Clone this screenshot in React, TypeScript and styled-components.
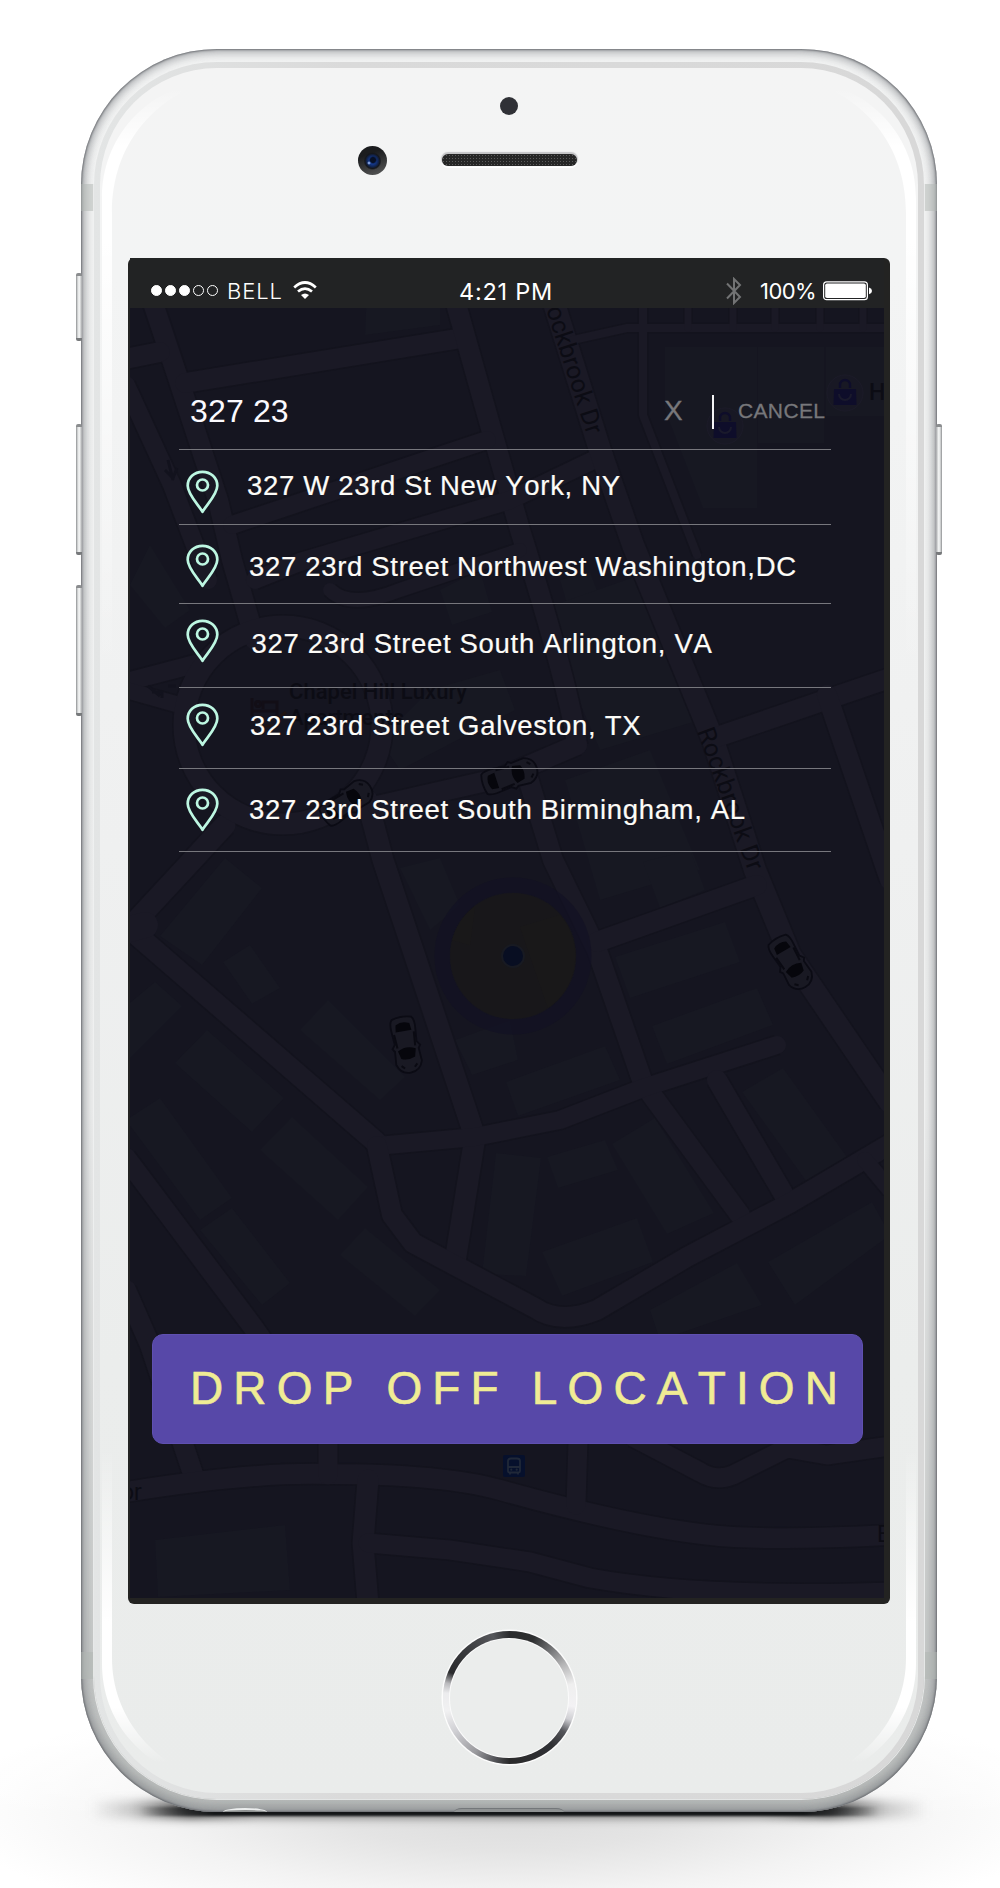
import React from "react";
import styled, { createGlobalStyle } from "styled-components";

const Global = createGlobalStyle`
  html, body { margin: 0; padding: 0; background: #fff; }
  * { box-sizing: border-box; }
`;

const sans = `"Liberation Sans", Arial, sans-serif`;

/* ---------- device ---------- */

const Page = styled.main`
  position: relative;
  width: 1000px;
  height: 1888px;
  padding: 49px 63px 0 81px;
  overflow: hidden;
  background: #fff;
  font-family: ${sans};
  font-kerning: none;
`;

const Floor = styled.div`
  position: absolute;
  left: 0;
  right: 0;
  top: 1600px;
  height: 288px;
  background:
    linear-gradient(#fff 0, rgba(255, 255, 255, 0.35) 190px, transparent 216px),
    radial-gradient(ellipse 560px 130px at 509px 212px, #dcdcdc 0, #e4e4e4 30%, #f3f3f3 62%, #fcfcfc 90%, #fff 100%);
`;

const Contact = styled.div`
  position: absolute;
  left: 90px;
  right: 72px;
  top: 1801px;
  height: 17px;
  background: linear-gradient(90deg, transparent 0, rgba(70, 70, 70, 0.25) 5%, rgba(20, 20, 20, 0.85) 12%, rgba(20, 20, 20, 0.5) 20%, rgba(20, 20, 20, 0.5) 80%, rgba(20, 20, 20, 0.85) 88%, rgba(70, 70, 70, 0.25) 95%, transparent 100%);
  filter: blur(5px);
`;

const ContactLine = styled.div`
  position: absolute;
  left: 140px;
  right: 122px;
  top: 1807px;
  height: 9px;
  background: linear-gradient(90deg, transparent 0, #141618 10%, #141618 90%, transparent 100%);
  filter: blur(1.3px);
`;

const Key = styled.span<{ $side: "left" | "right"; $top: number; $h: number }>`
  position: absolute;
  ${(p) => p.$side}: -5px;
  top: ${(p) => p.$top}px;
  width: 6px;
  height: ${(p) => p.$h}px;
  border-radius: 2px;
  border-top: 3px solid #8b8d8f;
  border-bottom: 3px solid #77797b;
  background: linear-gradient(${(p) => (p.$side === "left" ? "90deg" : "270deg")}, #8e9092 0, #e6e8e8 35%, #f0f1f1 60%, #a4a6a8 100%);
`;

const Phone = styled.div`
  position: relative;
  width: 856px;
  height: 1763px;
  padding: 13px;
  border-radius: 136px;
  background: linear-gradient(#f2f3f3, #eceded 60%, #b9bcbb);
  box-shadow:
    inset 0 0 2px 1px rgba(95, 97, 102, 0.8),
    inset 0 0 8px 4px rgba(135, 138, 143, 0.65),
    inset 0 -8px 8px rgba(140, 143, 143, 0.35);
`;

const Jack = styled.span`
  position: absolute;
  left: 142px;
  bottom: 0;
  width: 44px;
  height: 4px;
  border-top: 2px solid #eceeee;
  border-radius: 50% 50% 0 0 / 100% 100% 0 0;
  background: #8d9090;
`;

const Dock = styled.span`
  position: absolute;
  left: 373px;
  bottom: 0;
  width: 110px;
  height: 4px;
  border-top: 1px solid #74777a;
  border-radius: 8px 8px 0 0 / 4px 4px 0 0;
  background: #8f9293;
`;

const Antenna = styled.span<{ $side: "left" | "right"; $top: number }>`
  position: absolute;
  ${(p) => p.$side}: 0;
  top: ${(p) => p.$top}px;
  width: 13px;
  height: 27px;
  background: rgba(176, 181, 178, 0.5);
`;

const Bezel = styled.div`
  position: relative;
  height: 100%;
  padding: 6px;
  border-radius: 123px;
  background: linear-gradient(90deg, #e3e5e5, #dadada 30%, #d8d8d8);
  box-shadow: 0 0 0 1px rgba(240, 241, 241, 0.8);
`;

const Face = styled.div`
  position: relative;
  display: flex;
  flex-direction: column;
  align-items: center;
  height: 100%;
  border-radius: 117px;
  background: linear-gradient(#f4f4f4 0, #f3f4f4 12%, #eff0f0 45%, #ebedec 75%, #eaeceb 100%);
`;

const Gloss = styled.svg`
  position: absolute;
  left: 0;
  top: 0;
`;

const Forehead = styled.div`
  position: relative;
  display: grid;
  grid-template-columns: 1fr 135px 1fr;
  grid-template-rows: 18px 29px;
  row-gap: 30px;
  align-items: center;
  width: 100%;
  height: 190px;
  padding-top: 29px;
`;

const Proximity = styled.i`
  grid-column: 2;
  justify-self: center;
  width: 18px;
  height: 18px;
  border-radius: 50%;
  background: #303136;
`;

const Camera = styled.i`
  grid-row: 2;
  grid-column: 1;
  justify-self: end;
  width: 29px;
  height: 29px;
  margin: 1px 55px 0 0;
  border-radius: 50%;
  background:
    radial-gradient(circle at 11px 17px, #7d9bd8 0 1px, transparent 1.8px),
    radial-gradient(circle at 15px 14px, #071026 0 2.5px, transparent 4px),
    radial-gradient(circle at 14.5px 15px, #14398f 0 3px, #112656 5.5px, #15171c 7.5px, transparent 9px),
    linear-gradient(160deg, #1b1c1e 30%, #5b5b5b 100%);
`;

const Speaker = styled.i`
  grid-row: 2;
  grid-column: 2;
  height: 12px;
  border-radius: 6px;
  background:
    radial-gradient(circle, #5a5a5a 0.7px, transparent 1px) 0 0 / 3px 3px,
    #262626;
  box-shadow: 0 -1px 1px 1px #c4c4c6, 0 1px 0 1px #fff;
`;

const Chin = styled.div`
  display: flex;
  justify-content: center;
  width: 100%;
  padding-top: 27px;
`;

const HomeButton = styled.div`
  display: flex;
  align-items: center;
  justify-content: center;
  width: 133px;
  height: 133px;
  border-radius: 50%;
  box-shadow: 0 0 0 1.5px #fcfcfc;
  background: conic-gradient(
    #2b2c2e 0deg, #2e2f30 22deg, #77787a 42deg, #b4b4b5 58deg, #efefef 78deg, #f3f2f4 98deg,
    #cfcfd3 110deg, #55565b 122deg, #303135 138deg, #2a2a2b 180deg, #55565a 194deg, #9a9a9e 212deg,
    #cfcfd3 238deg, #f1f1f2 258deg, #ececee 274deg, #b9b9bc 283deg, #2a2b2d 293deg, #3a3b3e 318deg,
    #56575b 345deg, #2b2c2e 360deg
  );
`;

const HomePad = styled.div`
  width: 118px;
  height: 118px;
  flex: none;
  border-radius: 50%;
  background: #ebedec;
  box-shadow: 0 0 0 1px #fbfbfb;
`;

/* ---------- screen ---------- */

const Screen = styled.div`
  position: relative;
  display: flex;
  flex-direction: column;
  width: 762px;
  height: 1346px;
  padding: 0 6px 6px 2px;
  border-radius: 6px;
  background: #232322;
`;

const StatusBar = styled.header`
  display: grid;
  grid-template-columns: 308px auto 1fr;
  align-items: center;
  height: 50px;
  padding: 13px 11px 0 21px;
  background: #222324;
  color: #fff;
  font: 300 22px/36px Inter, ${sans};
`;

const Carrier = styled.div`
  display: flex;
  align-items: center;
`;

const Signal = styled.div`
  display: flex;
  gap: 3px;
`;

const Dot = styled.i<{ $on: boolean }>`
  width: 11px;
  height: 11px;
  border: 1px solid #fff;
  border-radius: 50%;
  background: ${(p) => (p.$on ? "#fff" : "transparent")};
`;

const CarrierName = styled.span`
  margin: 1px 10px 0 9px;
  letter-spacing: 0.9px;
`;

const Clock = styled.time`
  padding-top: 3px;
  font-weight: 400;
  font-size: 23.5px;
  letter-spacing: 0.75px;
`;

const Power = styled.div`
  display: flex;
  align-items: center;
  justify-content: flex-end;
`;

const Percent = styled.span`
  margin: 1px 7px 0 18px;
  font-weight: 400;
  letter-spacing: -0.6px;
`;

const Stage = styled.div`
  position: relative;
  flex: 1;
  overflow: hidden;
  background: #161620;
`;

const MapLayer = styled.svg`
  position: absolute;
  inset: 0;
`;

const Content = styled.div`
  position: relative;
  display: flex;
  flex-direction: column;
  height: 100%;
`;

const Search = styled.section`
  width: 652px;
  margin-left: 49px;
`;

const Query = styled.div`
  display: flex;
  height: 142px;
  padding: 85px 0 0 11px;
  border-bottom: 1px solid #77777d;
  white-space: nowrap;
`;

const Typed = styled.span`
  width: 474px;
  color: #fbfaff;
  font-size: 32px;
  line-height: 37px;
  letter-spacing: 0.15px;
`;

const Clear = styled.span`
  width: 48px;
  color: #77777b;
  font-size: 28px;
  line-height: 36px;
  -webkit-text-stroke: 0.3px #77777b;
`;

const Caret = styled.i`
  width: 2px;
  height: 34px;
  margin-top: 2px;
  background: #f4f4f6;
`;

const Cancel = styled.span`
  margin-left: 24px;
  color: #77777b;
  font-size: 21px;
  line-height: 36px;
  letter-spacing: 0.35px;
  -webkit-text-stroke: 0.3px #77777b;
`;

const Results = styled.ul`
  margin: 0;
  padding: 0;
  list-style: none;
`;

const Result = styled.li<{ $h: number }>`
  display: flex;
  height: ${(p) => p.$h}px;
  border-bottom: 1px solid #77777d;
`;

const Pin = styled.svg<{ $top: number }>`
  flex: none;
  margin: ${(p) => p.$top}px 0 0 6px;
`;

const Address = styled.span<{ $top: number; $left: number }>`
  margin: ${(p) => p.$top}px 0 0 ${(p) => p.$left}px;
  color: #fdfcf8;
  font-size: 27.5px;
  line-height: 32px;
  letter-spacing: 0.68px;
  white-space: nowrap;
  -webkit-text-stroke: 0.2px #fdfcf8;
`;

const DropOff = styled.button`
  width: 711px;
  height: 110px;
  margin: auto 0 154px 22px;
  padding: 0 0 3px 37px;
  border: 1px solid #5f50b0;
  border-radius: 11px;
  background: #5748a8;
  color: #f0ec94;
  font: 46px/106px ${sans};
  font-kerning: none;
  letter-spacing: 10.15px;
  text-align: left;
  white-space: nowrap;
  -webkit-text-stroke: 0.6px #f0ec94;
`;

/* ---------- map ---------- */

const roads: [string, number][] = [
  ["M152 300 L178 378 L218 500 L232 560 L255 640", 20],
  ["M126 385 L172 485 L208 580", 18],
  ["M120 360 L160 352", 20],
  ["M185 383 L462 338", 20],
  ["M455 300 L490 425 L520 530 Q570 690 577 745", 20],
  ["M232 525 L487 440", 18],
  ["M255 580 L300 562 L510 500 L604 455", 18],
  ["M330 590 Q350 610 400 590 L520 550", 14],
  ["M553 300 L600 450 L633 545 L713 740 L755 870 L790 955 L890 1102", 22],
  ["M573 340 L627 328 L890 328", 8],
  ["M643 300 L643 415 L697 555", 8],
  ["M688 300V328", 7],
  ["M733 300V328", 7],
  ["M775 300V328", 7],
  ["M820 300V328", 7],
  ["M863 300V328", 7],
  ["M126 682 L195 664", 18],
  ["M126 690 L190 708", 16],
  ["M225 825 L135 922 L137 935 L377 1143", 21],
  ["M126 930 L145 925", 26],
  ["M367 800 L383 860 L475 1137 L455 1262", 21],
  ["M377 806 L500 778 L577 745", 20],
  ["M527 775 L553 860 L597 950 L643 1083 L740 1215", 20],
  ["M717 737 L890 678", 20],
  ["M827 695 L890 880", 20],
  ["M597 942 L757 885", 20],
  ["M377 1146 L475 1137 L560 1120 L643 1088 L777 1045", 18],
  ["M717 1080 L787 1200", 20],
  ["M890 1144 L790 1203 L687 1257 L597 1310 Q560 1325 535 1308 L413 1243 L392 1215 L377 1146", 20],
  ["M865 1160 L890 1190", 16],
  ["M126 1158 L253 1327 L290 1380", 20],
  ["M126 1290 L150 1345 L195 1480", 20],
  ["M126 1492 Q250 1472 327 1474 Q443 1474 500 1490 Q650 1532 733 1537 Q800 1540 890 1535", 20],
  ["M328 1440V1475", 19],
  ["M368 1480 L363 1543 L368 1604", 21],
  ["M368 1543 L450 1550 L530 1562 L590 1578 Q700 1598 890 1592", 19],
  ["M578 1440 L576 1505", 19],
  ["M633 1437 L700 1472 Q716 1482 733 1475 L787 1448 L827 1455 L890 1446", 19],
];

const buildings = [
  "665,347 757,347 757,508 703,508 665,410",
  "758,347 824,347 824,443 758,443",
  "826,347 890,347 890,416 826,416",
  "225,858 262,888 202,965 160,936",
  "250,945 280,988 252,1004 223,962",
  "155,982 182,1006 130,1058 126,1006",
  "207,1030 284,1098 252,1132 175,1063",
  "328,1000 405,1077 380,1100 300,1030",
  "160,1098 232,1198 200,1220 126,1120",
  "292,1117 368,1187 338,1220 260,1150",
  "232,1208 290,1283 262,1305 200,1230",
  "365,1228 440,1290 415,1316 340,1255",
  "615,957 725,922 740,962 630,998",
  "652,1026 757,988 773,1025 667,1064",
  "506,1082 605,1046 620,1080 518,1116",
  "742,1092 783,1068 847,1157 806,1181",
  "612,1144 655,1118 714,1213 667,1234",
  "547,1157 605,1140 618,1170 558,1188",
  "542,1252 637,1218 653,1262 562,1296",
  "496,1153 541,1158 526,1276 482,1274",
  "768,1262 872,1202 890,1235 795,1305",
  "650,1310 737,1263 762,1305 660,1340",
  "400,868 440,858 460,905 430,930",
  "455,1040 510,1020 518,1060 472,1075",
  "130,585 150,545 190,610 165,628",
  "440,590 480,570 492,612 452,625",
  "560,580 590,572 610,625 575,632",
  "540,610 640,575 700,720 600,750",
  "430,690 500,670 515,710 400,770 380,740",
  "565,780 650,750 700,870 600,900",
  "643,862 690,850 705,890 660,908",
  "155,1540 285,1525 290,1590 158,1597",
  "370,220 440,220 440,325 365,335",
];

const Car = ({ x, y, r }: { x: number; y: number; r: number }) => (
  <g transform={`translate(${x} ${y}) rotate(${r})`}>
    <path
      d="M-10 -27 Q0 -30 10 -27 Q13 -24 12 -14 L11 -2 L14 2 L12 5 L13 18 Q10 28 0 28 Q-10 28 -13 18 L-12 5 L-14 2 L-11 -2 L-12 -14 Q-13 -24 -10 -27Z"
      fill="#191923"
      stroke="#0b0b14"
      strokeWidth="1.8"
    />
    <path d="M-7 -21 Q0 -25 7 -21 L8 -14 H-8Z M-9 5 Q0 0 9 5 L7 13 Q0 16 -7 13Z" fill="#06060c" />
    <path d="M-10 -12 L-9 2 M10 -12 L9 2 M-8 20 l3 3 M8 20 l-3 3" stroke="#0a0a12" strokeWidth="2" />
  </g>
);

const Bag = ({ x, y }: { x: number; y: number }) => (
  <g transform={`translate(${x} ${y})`}>
    <circle r="18" fill="#181824" stroke="#1c1b29" />
    <path d="M-11 -4 H11 L11.500 12 H-11.500Z" fill="#0e0d2a" />
    <path d="M-5 -5 V-8 A5 5 0 0 1 5 -8 V-5" fill="none" stroke="#0e0d2a" strokeWidth="2.4" />
    <path d="M-6 1 A6 6 0 0 0 6 1" fill="none" stroke="#1a1a2c" strokeWidth="2" />
  </g>
);

const StreetMap = () => (
  <MapLayer width="754" height="1290" viewBox="130 308 754 1290">
    <rect x="130" y="308" width="754" height="1290" fill="#151520" />
    {buildings.map((b) => (
      <polygon key={b} points={b} fill="#171822" />
    ))}
    <g fill="none" strokeLinejoin="round" stroke="#13131d">
      {roads.map(([d, w]) => (
        <path key={d} d={d} strokeWidth={w + 3} />
      ))}
      <circle cx="283" cy="725" r="99" strokeWidth="24" />
    </g>
    <g fill="none" strokeLinejoin="round" strokeLinecap="round" stroke="#1a1925">
      {roads.map(([d, w]) => (
        <path key={d} d={d} strokeWidth={w} />
      ))}
      <circle cx="283" cy="725" r="99" strokeWidth="21" />
    </g>
    <circle cx="513" cy="956" r="63" fill="#19171a" opacity="0.85" />
    <circle cx="513" cy="956" r="71" fill="none" stroke="#121123" strokeWidth="15" opacity="0.7" />
    <path d="M452 940 A63 63 0 0 1 475 906 L470 945Z M520 927 L560 915 A63 63 0 0 1 548 1008Z" fill="#1a1919" opacity="0.8" />
    <circle cx="513" cy="956" r="11" fill="#080e22" stroke="#181a22" strokeWidth="2" />
    <Bag x={845} y={393} />
    <Bag x={725} y={426} />
    <g fill="#0c0c14" fontFamily="Roboto, sans-serif">
      <text x="869" y="400" fontSize="23" fontWeight="500">H</text>
      <text transform="translate(546 309) rotate(72)" fontSize="25" textLength="133">ockbrook Dr</text>
      <text transform="translate(697 731) rotate(70)" fontSize="25" textLength="150">Rockbrook Dr</text>
      <text x="289" y="699" fontSize="22" fontWeight="500" textLength="178">Chapel Hill Luxury</text>
      <text x="289" y="725" fontSize="22" fontWeight="500" textLength="115">Apartments</text>
      <text x="121" y="1500" fontSize="23">or</text>
      <text x="877" y="1542" fontSize="23">E</text>
    </g>
    <g fill="none" stroke="#120e16" strokeWidth="3">
      <path d="M252 698 V716 M252 711 H277 V716 M277 711 V702 H263 V709" />
      <circle cx="258" cy="704" r="2.5" />
      <path d="M264 726 h14 M281 716 l5 -4" stroke="#1f1412" />
    </g>
    <g fill="none" stroke="#12121d" strokeWidth="3">
      <path d="M148 686 L160 696 M168 686 H176 M152 692 L162 692 V698" />
      <path d="M168 460 L173 480 M165 470 L173 478 L177 468" />
    </g>
    <g transform="translate(503 1455)">
      <rect width="22" height="22" rx="2" fill="#06102c" />
      <path d="M5 16 V6 Q5 3.500 8 3.500 H14 Q17 3.500 17 6 V16 Q17 17.500 15.500 17.500 H6.500 Q5 17.500 5 16Z M5.500 12 H16.500 M7 17.500 V19.500 M15 17.500 V19.500" fill="none" stroke="#202838" strokeWidth="1.8" />
      <circle cx="8.300" cy="14.700" r="1.100" fill="#202838" />
      <circle cx="13.700" cy="14.700" r="1.100" fill="#202838" />
    </g>
    <Car x={406} y={1045} r={-10} />
    <Car x={791} y={963} r={-31} />
    <Car x={510} y={776} r={-108} />
    <Car x={347} y={802} r={-125} />
  </MapLayer>
);

/* ---------- icons ---------- */

const Wifi = () => (
  <svg width="24" height="19" viewBox="0 0 24 19">
    <g fill="none" stroke="#fff" strokeWidth="2.7">
      <path d="M1.200 6.400 Q12 -3.400 22.800 6.400" />
      <path d="M5 10.600 Q12 4.600 19 10.600" />
    </g>
    <path d="M8 14 Q12 10.800 16 14 L12 18Z" fill="#fff" />
  </svg>
);

const Bluetooth = () => (
  <svg width="16" height="28" viewBox="0 0 16 28">
    <path d="M1 6.500 L14 20 L8 26 V2 L14 8 L1 21.500" fill="none" stroke="#727374" strokeWidth="2" />
  </svg>
);

const Battery = () => (
  <svg width="50" height="20" viewBox="0 0 50 20">
    <rect x="0.600" y="0.900" width="43.800" height="17.800" rx="3" fill="none" stroke="#fff" strokeWidth="1.200" />
    <rect x="2.200" y="2.500" width="40.600" height="14.600" rx="1.800" fill="#fff" />
    <path d="M46 6.500 Q49 7.500 49 9.900 Q49 12.300 46 13.300Z" fill="#fff" />
  </svg>
);

const LocationPin = ({ top }: { top: number }) => (
  <Pin $top={top} width="35" height="44" viewBox="0 0 35 44">
    <g fill="none" stroke="#bdf7e2" strokeWidth="2.700" strokeLinejoin="round">
      <path d="M17.500 41.800 C13.500 35 2.700 24.500 2.700 15.800 C2.700 7.800 9.200 1.800 17.500 1.800 C25.800 1.800 32.300 7.800 32.300 15.800 C32.300 24.500 21.500 35 17.500 41.800Z" />
      <circle cx="17.500" cy="15" r="5.500" />
    </g>
  </Pin>
);

const results = [
  { text: "327 W 23rd St New York, NY", h: 75, pin: 20, top: 20, left: 27 },
  { text: "327 23rd Street Northwest Washington,DC", h: 79, pin: 19, top: 26, left: 29 },
  { text: "327 23rd Street South Arlington, VA", h: 84, pin: 15, top: 24, left: 31.5 },
  { text: "327 23rd Street Galveston, TX", h: 81, pin: 15, top: 22, left: 30 },
  { text: "327 23rd Street South Birmingham, AL", h: 83, pin: 19, top: 25, left: 29 },
];

export default function App() {
  return (
    <Page>
      <Global />
      <Floor />
      <Contact />
      <ContactLine />
      <Phone>
        <Key $side="left" $top={224} $h={68} />
        <Key $side="left" $top={375} $h={131} />
        <Key $side="left" $top={536} $h={131} />
        <Key $side="right" $top={375} $h={131} />
        <Antenna $side="left" $top={135} />
        <Antenna $side="right" $top={135} />
        <Antenna $side="left" $top={1603} />
        <Antenna $side="right" $top={1603} />
        <Jack />
        <Dock />
        <Bezel>
          <Face>
            <Gloss width="818" height="1726" viewBox="0 0 818 1726">
              <defs>
                <linearGradient id="gloss" x1="0" y1="0" x2="0" y2="1726" gradientUnits="userSpaceOnUse">
                  <stop offset="0.012" stopColor="#fff" stopOpacity="0" />
                  <stop offset="0.045" stopColor="#fff" stopOpacity="1" />
                  <stop offset="0.1" stopColor="#fff" stopOpacity="1" />
                  <stop offset="0.2" stopColor="#fff" stopOpacity="0.5" />
                  <stop offset="0.35" stopColor="#fff" stopOpacity="0" />
                  <stop offset="0.8" stopColor="#fff" stopOpacity="0" />
                  <stop offset="0.9" stopColor="#fff" stopOpacity="1" />
                  <stop offset="0.95" stopColor="#fff" stopOpacity="1" />
                  <stop offset="0.982" stopColor="#fff" stopOpacity="0" />
                </linearGradient>
              </defs>
              <path
                fill="url(#gloss)"
                d="M2 130 C2 70 45 20 110 12 C55 30 12 75 12 145 V1590 C12 1650 55 1700 115 1714 C45 1706 2 1655 2 1596Z M816 130 C816 70 773 20 708 12 C763 30 806 75 806 145 V1590 C806 1650 763 1700 703 1714 C773 1706 816 1655 816 1596Z"
              />
            </Gloss>
            <Forehead>
              <Proximity />
              <Camera />
              <Speaker />
            </Forehead>
            <Screen>
              <StatusBar>
                <Carrier>
                  <Signal>
                    {[true, true, true, false, false].map((on, i) => (
                      <Dot key={i} $on={on} />
                    ))}
                  </Signal>
                  <CarrierName>BELL</CarrierName>
                  <Wifi />
                </Carrier>
                <Clock>4:21 PM</Clock>
                <Power>
                  <Bluetooth />
                  <Percent>100%</Percent>
                  <Battery />
                </Power>
              </StatusBar>
              <Stage>
                <StreetMap />
                <Content>
                  <Search>
                    <Query>
                      <Typed>327 23</Typed>
                      <Clear>X</Clear>
                      <Caret />
                      <Cancel>CANCEL</Cancel>
                    </Query>
                    <Results>
                      {results.map((r) => (
                        <Result key={r.text} $h={r.h}>
                          <LocationPin top={r.pin} />
                          <Address $top={r.top} $left={r.left}>
                            {r.text}
                          </Address>
                        </Result>
                      ))}
                    </Results>
                  </Search>
                  <DropOff>DROP OFF LOCATION</DropOff>
                </Content>
              </Stage>
            </Screen>
            <Chin>
              <HomeButton>
                <HomePad />
              </HomeButton>
            </Chin>
          </Face>
        </Bezel>
      </Phone>
    </Page>
  );
}
